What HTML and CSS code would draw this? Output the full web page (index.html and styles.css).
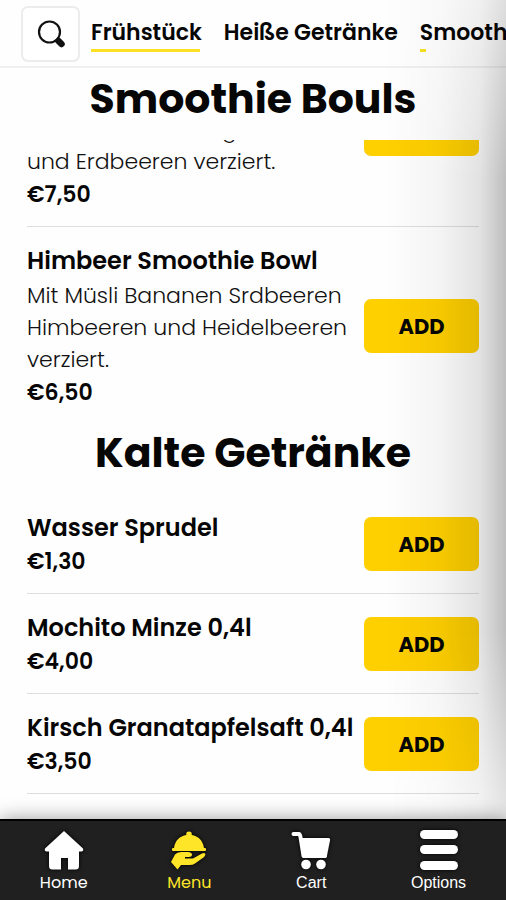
FILE: index.html
```html
<!DOCTYPE html>
<html lang="de">
<head>
<meta charset="utf-8">
<meta name="viewport" content="width=device-width, initial-scale=1">
<title>Menu</title>
<link rel="stylesheet" href="styles.css">
</head>
<body>
<div class="app">
  <header class="topbar">
    <button class="search" type="button" aria-label="Suche">
      <svg width="28" height="28" viewBox="0 0 28 28" aria-hidden="true">
        <circle cx="12.500" cy="12" r="10.500" fill="none" stroke="#111" stroke-width="2.200"/>
        <path d="M19.500 19L22 21.500" stroke="#111" stroke-width="4"/>
        <path d="M21.500 21L24.500 24" stroke="#111" stroke-width="6.500" stroke-linecap="round"/>
      </svg>
    </button>
    <nav class="tabs" aria-label="Kategorien">
      <a class="tab tab-active" href="#fruehstueck">Frühstück</a>
      <a class="tab" href="#heisse-getraenke">Heiße Getränke</a>
      <a class="tab tab-next" href="#smoothie">Smoothie</a>
    </nav>
  </header>

  <h2 class="heading">Smoothie Bouls</h2>
  <main class="menu">
    <div class="scrolled">
      <article class="item item-tall">
        <div class="text">
          <p class="desc">Mit Müsli Kiwi, Mango<br>und Erdbeeren verziert.</p>
          <p class="price">€7,50</p>
        </div>
        <button class="add" type="button">ADD</button>
      </article>
    </div>
    <article class="item item-last">
      <div class="text">
        <h3 class="name">Himbeer Smoothie Bowl</h3>
        <p class="desc">Mit Müsli Bananen Srdbeeren<br>Himbeeren und Heidelbeeren<br>verziert.</p>
        <p class="price">€6,50</p>
      </div>
      <button class="add" type="button">ADD</button>
    </article>
    <h2 class="heading">Kalte Getränke</h2>
    <article class="item">
      <div class="text">
        <h3 class="name">Wasser Sprudel</h3>
        <p class="price">€1,30</p>
      </div>
      <button class="add" type="button">ADD</button>
    </article>
    <article class="item">
      <div class="text">
        <h3 class="name">Mochito Minze 0,4l</h3>
        <p class="price">€4,00</p>
      </div>
      <button class="add" type="button">ADD</button>
    </article>
    <article class="item">
      <div class="text">
        <h3 class="name">Kirsch Granatapfelsaft 0,4l</h3>
        <p class="price">€3,50</p>
      </div>
      <button class="add" type="button">ADD</button>
    </article>
  </main>

  <nav class="bottombar" aria-label="Navigation">
    <a class="link" href="#home">
      <svg width="40" height="40" viewBox="0 0 40 40" aria-hidden="true">
        <path d="M20 1L39 18.500Q40 21.500 37 21.500H35V36Q35 39.500 31.500 39.500H24V28H17V39.500H8.500Q5 39.500 5 36V21.500H3Q0 21.500 1 18.500Z" fill="#fff"/>
      </svg>
      <span>Home</span>
    </a>
    <a class="link link-active" href="#menu">
      <svg width="36" height="40" viewBox="0 0 36 40" aria-hidden="true">
        <g fill="#ffe528">
          <path d="M3 18C4 10.500 9 6 15.300 5V4Q15 1.500 18 1.500T20.700 4V5C27 6 32 10.500 33 18Z"/>
          <rect x="1" y="18" width="34" height="3" rx="1"/>
          <path d="M0 32L4 24.500Q6 22 10 22H17Q21 22.500 21 24.500T18 27H14V28.500H22L31 23.500Q34 22 34.500 24.500Q34 26.500 31 28.500L24 33.500Q22 35 18 35H10L6.500 39.500Z"/>
        </g>
      </svg>
      <span>Menu</span>
    </a>
    <a class="link link-plain" href="#cart">
      <svg width="40" height="40" viewBox="0 0 40 40" aria-hidden="true">
        <path d="M2.500 4H8Q9 4 9.500 7L12.500 26H34" fill="none" stroke="#fff" stroke-width="4" stroke-linecap="round" stroke-linejoin="round"/>
        <path d="M9.500 8H37.500Q39.500 8 39 10.500L36 25.500Q35.500 28 33 28H12Z" fill="#fff"/>
        <circle cx="15" cy="34.500" r="4.800" fill="#fff"/>
        <circle cx="30" cy="34.500" r="4.800" fill="#fff"/>
      </svg>
      <span>Cart</span>
    </a>
    <a class="link link-plain" href="#options">
      <svg width="40" height="40" viewBox="0 0 40 40" aria-hidden="true">
        <g fill="#fff">
          <rect x="1" y="0" width="38" height="9" rx="4.500"/>
          <rect x="1" y="15" width="38" height="9" rx="4.500"/>
          <rect x="1" y="31" width="38" height="9" rx="4.500"/>
        </g>
      </svg>
      <span>Options</span>
    </a>
  </nav>
  <div class="edge-shade"></div>
</div>
</body>
</html>
```

FILE: styles.css
```css
* {
  box-sizing: border-box;
}

body,
h2,
h3,
p {
  margin: 0;
}

body {
  font-family: Poppins, Inter, "Liberation Sans", sans-serif;
  color: #060606;
  background: #fefefe;
}

a {
  color: inherit;
  text-decoration: none;
}

button {
  font: inherit;
  color: inherit;
  cursor: pointer;
}

.app {
  position: relative;
  display: flex;
  flex-direction: column;
  height: 100vh;
  overflow: hidden;
}

.topbar {
  display: flex;
  flex: none;
  align-items: flex-start;
  gap: 11px;
  padding: 6px 0 4px 21px;
  border-bottom: 2px solid #f0f0f0;
}

.search {
  display: flex;
  flex: none;
  align-items: center;
  justify-content: center;
  width: 59px;
  height: 56px;
  padding: 0;
  background: #fff;
  border: 2px solid #ececec;
  border-radius: 7px;
}

.tabs {
  display: flex;
  flex: 1;
  gap: 22px;
  min-width: 0;
  padding-top: 11px;
  overflow: hidden;
}

.tab {
  position: relative;
  flex: none;
  height: 35px;
  font-size: 22px;
  font-weight: 600;
  line-height: 32px;
  white-space: nowrap;
}

.tab-active::after,
.tab-next::after {
  content: "";
  position: absolute;
  bottom: 0;
  left: 0;
  width: 98%;
  height: 3px;
  background: #fbe122;
}

.tab-next::after {
  width: 6px;
}

.heading {
  flex: none;
  padding-bottom: 10px;
  font-size: 41px;
  font-weight: 700;
  line-height: 62px;
  text-align: center;
}

.menu {
  flex: 1;
  min-height: 0;
  padding: 0 27px;
  overflow: hidden;
}

.scrolled {
  display: flex;
  flex-direction: column;
  justify-content: flex-end;
  height: 87px;
  overflow: hidden;
}

.item {
  display: flex;
  flex: none;
  align-items: center;
  justify-content: space-between;
  padding: 16px 0 15px;
  border-bottom: 1px solid #dedede;
}

.item-tall {
  height: 197px;
}

.item-tall .text {
  align-self: flex-end;
}

.item-last {
  padding-bottom: 13px;
  border-bottom: 0;
}

.text {
  flex: 1;
  min-width: 0;
  white-space: nowrap;
}

.name {
  font-size: 24px;
  font-weight: 600;
  line-height: 35px;
}

.desc {
  margin-top: 2px;
  font-size: 22px;
  font-weight: 300;
  line-height: 32px;
  color: #111;
}

.price {
  font-size: 22px;
  font-weight: 600;
  line-height: 33px;
}

.add {
  flex: none;
  width: 115px;
  height: 54px;
  padding: 0;
  font-size: 21px;
  font-weight: 700;
  background: #ffd000;
  border: 0;
  border-radius: 7px;
}

.bottombar {
  position: relative;
  z-index: 2;
  display: flex;
  flex: none;
  justify-content: space-around;
  height: 81px;
  padding-top: 9px;
  color: #fff;
  background: #202020;
  border-top: 2px solid #000;
  box-shadow: 0 0 18px rgba(0, 0, 0, 0.4);
}

.link {
  display: flex;
  flex-direction: column;
  align-items: center;
  font-size: 16px;
  line-height: 26px;
}

.link svg {
  overflow: visible;
  filter: drop-shadow(0 0 2px #000);
}

.link-active {
  color: #ffe528;
}

.link-plain {
  font-family: "Liberation Sans", Arial, sans-serif;
}

.edge-shade {
  position: absolute;
  z-index: 1;
  top: 0;
  right: 0;
  bottom: 0;
  width: 120px;
  pointer-events: none;
  background: linear-gradient(to right, rgba(0, 0, 0, 0), rgba(0, 0, 0, 0.04) 45%, rgba(0, 0, 0, 0.11) 78%, rgba(0, 0, 0, 0.25));
  mask-image: linear-gradient(to bottom, rgba(0, 0, 0, 0.5), #000 20%, #000 70%, rgba(0, 0, 0, 0.4) 90%);
}
```
